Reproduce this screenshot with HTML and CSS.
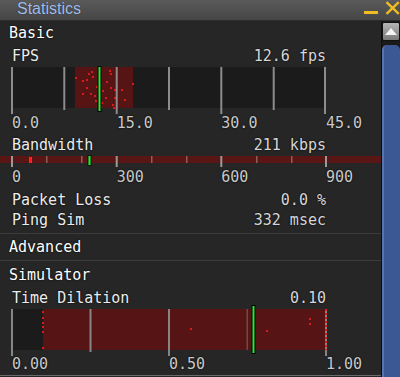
FILE: index.html
```html
<!DOCTYPE html>
<html lang="en">
      <head>
      <meta charset="UTF-8" />
      <meta name="viewport" content="width=device-width, initial-scale=1.0" />
      <title>Statistics</title>
      <link rel="stylesheet" href="styles.css">
      </head>
      <body>
      <div class="floater">
            <div class="titlebar">
                  <span class="title">Statistics</span>
                  <div class="controls">
                        <span class="btn-min"></span>
                        <svg class="btn-close" width="15" height="14" viewBox="0 0 15 14">
                              <path d="M1.5 1.2 L13.8 12.8 M13.8 1.2 L1.5 12.8" stroke="#efbd22" stroke-width="2.4" fill="none" />
                        </svg>
                  </div>
            </div>
            <div class="body">
                  <div class="content">
                        <div class="section-head">Basic</div>
                        <div class="stat"><span>FPS</span><span class="value">12.6 fps</span></div>
                        <svg class="graph" width="381" height="49">
                              <rect x="12" y="1" width="314" height="41" fill="#1b1b1b" />
                              <rect x="75" y="1" width="58" height="41" fill="#571414" />
                              <g fill="#d81a1a">
                                    <rect x="75" y="11" width="2" height="2" /><rect x="82" y="14" width="2" height="2" />
                                    <rect x="86" y="13" width="2" height="2" /><rect x="88" y="7" width="2" height="2" />
                                    <rect x="91" y="5" width="2" height="2" /><rect x="92" y="10" width="2" height="2" />
                                    <rect x="86" y="21" width="2" height="2" /><rect x="82" y="27" width="2" height="2" />
                                    <rect x="90" y="27" width="2" height="2" /><rect x="94" y="29" width="2" height="2" />
                                    <rect x="95" y="34" width="2" height="2" /><rect x="100" y="40" width="2" height="2" />
                                    <rect x="101" y="36" width="2" height="2" /><rect x="105" y="31" width="2" height="2" />
                                    <rect x="106" y="15" width="2" height="2" /><rect x="109" y="4" width="2" height="2" />
                                    <rect x="110" y="7" width="2" height="2" /><rect x="110" y="21" width="2" height="2" />
                                    <rect x="114" y="23" width="2" height="2" /><rect x="114" y="31" width="2" height="2" />
                                    <rect x="112" y="38" width="2" height="2" /><rect x="113" y="41" width="2" height="2" />
                                    <rect x="116" y="19" width="2" height="2" /><rect x="121" y="23" width="2" height="2" />
                                    <rect x="124" y="33" width="2" height="2" /><rect x="132" y="17" width="2" height="2" />
                                    <rect x="96" y="20" width="2" height="2" /><rect x="102" y="24" width="2" height="2" />
                              </g>
                              <g fill="#8c8c8c">
                                    <rect x="11" y="1" width="2" height="47" />
                                    <rect x="63.3" y="1" width="2" height="43" />
                                    <rect x="115.7" y="1" width="2" height="47" />
                                    <rect x="168" y="1" width="2" height="43" />
                                    <rect x="220.3" y="1" width="2" height="47" />
                                    <rect x="272.7" y="1" width="2" height="43" />
                                    <rect x="324" y="1" width="2" height="47" />
                              </g>
                              <rect x="98" y="0.5" width="3" height="45" fill="#2fe52f" stroke="#050505" stroke-width="1" />
                        </svg>
                        <div class="axis axis-thirds"><span>0.0</span><span>15.0</span><span>30.0</span><span>45.0</span></div>

                        <div class="stat stat-gap"><span>Bandwidth</span><span class="value">211 kbps</span></div>
                        <svg class="graph" width="381" height="14">
                              <rect x="0" y="1" width="381" height="7" fill="#5a1515" />
                              <g fill="#9a9a9a">
                                    <rect x="11" y="1" width="2" height="11" />
                                    <rect x="115.7" y="1" width="2" height="11" />
                                    <rect x="220.3" y="1" width="2" height="11" />
                                    <rect x="325" y="1" width="2" height="11" />
                              </g>
                              <g fill="#8a5f5f">
                                    <rect x="46" y="1" width="1.5" height="7" />
                                    <rect x="81" y="1" width="1.5" height="7" />
                                    <rect x="151" y="1" width="1.5" height="7" />
                                    <rect x="186" y="1" width="1.5" height="7" />
                                    <rect x="256" y="1" width="1.5" height="7" />
                                    <rect x="291" y="1" width="1.5" height="7" />
                              </g>
                              <rect x="29" y="2" width="3" height="6" fill="#ff2222" />
                              <rect x="88" y="0.5" width="3" height="10" fill="#2fe52f" stroke="#050505" stroke-width="0.8" />
                        </svg>
                        <div class="axis axis-thirds"><span>0</span><span>300</span><span>600</span><span>900</span></div>

                        <div class="stat-list">
                              <div class="stat"><span>Packet Loss</span><span class="value">0.0 %</span></div>
                              <div class="stat"><span>Ping Sim</span><span class="value">332 msec</span></div>
                        </div>

                        <div class="section-head section-divided section-tall">Advanced</div>
                        <div class="section-head section-divided section-sim">Simulator</div>
                        <div class="stat stat-td"><span>Time Dilation</span><span class="value">0.10</span></div>
                        <svg class="graph" width="381" height="51">
                              <rect x="12" y="4" width="314" height="41" fill="#1b1b1b" />
                              <rect x="43" y="4" width="283" height="41" fill="#571414" />
                              <g fill="#858585">
                                    <rect x="11" y="4" width="2" height="47" />
                                    <rect x="89.5" y="4" width="2" height="43" />
                                    <rect x="168" y="4" width="2" height="47" />
                                    <rect x="325" y="4" width="2" height="47" />
                              </g>
                              <rect x="246.5" y="4" width="1.5" height="41" fill="#6e4a4a" />
                              <g fill="#d81a1a">
                                    <rect x="42" y="6" width="2" height="2" /><rect x="42" y="12" width="2" height="2" />
                                    <rect x="42" y="17" width="2" height="2" /><rect x="42" y="21" width="2" height="2" />
                                    <rect x="42" y="26" width="2" height="2" /><rect x="42" y="42" width="2" height="2" />
                                    <rect x="190" y="23" width="2" height="2" /><rect x="266" y="25" width="2" height="2" />
                                    <rect x="309" y="13" width="2" height="2" /><rect x="309" y="18" width="2" height="2" />
                              </g>
                              <line x1="326" y1="4" x2="326" y2="45" stroke="#e01e1e" stroke-width="2" stroke-dasharray="2 2" />
                              <rect x="252" y="0.5" width="3" height="48" fill="#2fe52f" stroke="#050505" stroke-width="1" />
                        </svg>
                        <div class="axis axis-halves"><span>0.00</span><span>0.50</span><span>1.00</span></div>
                        <div class="bottom-edge"></div>
                  </div>
                  <div class="scrollbar">
                        <div class="scroll-up">
                              <svg width="14" height="10" viewBox="0 0 14 10"><path d="M7 1 L13 8 L1 8 Z" fill="#f4f4f4" /></svg>
                        </div>
                        <div class="scroll-thumb"></div>
                  </div>
            </div>
      </div>
      </body>
</html>
```

FILE: styles.css
```css
body {
      margin: 0;
      background-color: #262626;
      font-family: "DejaVu Sans Mono", monospace;
      font-size: 15px;
      color: #ececec;
      text-shadow: 0 0 2px #000;
}
.floater {
      width: 400px;
      height: 377px;
      overflow: hidden;
      display: flex;
      flex-direction: column;
}
.titlebar {
      height: 20px;
      border-bottom: 1px solid #2c2c2c;
      background: linear-gradient(#5a5a5a, #464646);
      display: flex;
      align-items: flex-start;
}
.title {
      font-family: "Liberation Sans", sans-serif;
      font-size: 16px;
      line-height: 17px;
      color: #a2bee6;
      padding-left: 17px;
      text-shadow: 0 0 1px #223;
}
.controls {
      margin-left: auto;
      display: flex;
      align-items: flex-start;
      gap: 7px;
      padding-top: 1px;
}
.btn-min {
      width: 14px;
      height: 3px;
      margin-top: 10px;
      background-color: #efbd22;
}
.btn-close {
      display: block;
}
.body {
      flex: 1;
      display: flex;
      min-height: 0;
}
.content {
      width: 381px;
      flex: none;
      display: flex;
      flex-direction: column;
      background-color: #262626;
}
.section-head {
      padding-left: 9px;
      height: 25px;
      line-height: 24px;
      color: #ffffff;
}
.section-divided {
      border-top: 1px solid #3b3b3b;
}
.section-tall {
      height: 26px;
      line-height: 26px;
}
.section-sim {
      height: 24px;
      padding-top: 2px;
      line-height: 24px;
}
.stat {
      display: flex;
      justify-content: space-between;
      padding: 0 55px 0 12px;
      height: 20px;
      line-height: 20px;
}
.stat-gap {
      margin-top: 4px;
}
.stat-td {
      height: 18px;
      line-height: 22px;
}
.stat-list {
      padding-top: 5px;
      padding-bottom: 3px;
}
.value {
      color: #d6d6d6;
}
.graph {
      display: block;
      flex: none;
}
.axis {
      display: flex;
      padding-left: 12px;
      height: 16px;
      line-height: 16px;
      color: #c8c8c8;
}
.axis span {
      flex: none;
}
.axis-thirds span {
      width: 104.67px;
}
.axis-halves span {
      width: 157px;
}
.bottom-edge {
      margin-top: 3px;
      border-top: 1px solid #6a6a6a;
}
.scrollbar {
      width: 18px;
      flex: none;
      border-left: 1px solid #0c0c0c;
      background-color: #1a1a1a;
      display: flex;
      flex-direction: column;
}
.scroll-up {
      margin-top: 1px;
      height: 17px;
      border: 1px solid #111;
      border-radius: 2px;
      background: linear-gradient(#b4b4b4, #7a7a7a);
      display: flex;
      justify-content: center;
      align-items: center;
}
.scroll-up svg {
      display: block;
}
.scroll-thumb {
      flex: 1;
      margin-top: 4px;
      border-left: 2px solid #5574b2;
      border-radius: 5px 5px 0 0;
      background-color: #3b5894;
}
```
